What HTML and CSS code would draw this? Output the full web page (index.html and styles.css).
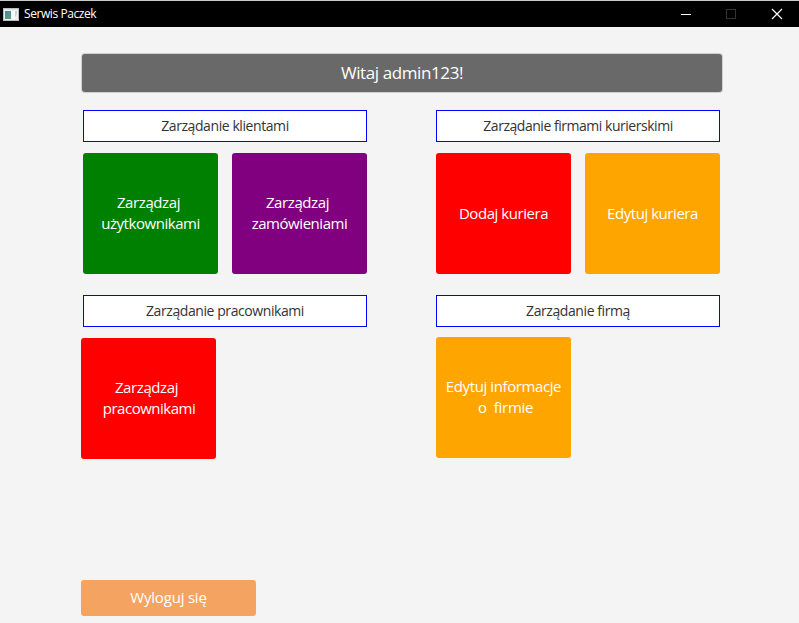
FILE: index.html
```html
<!DOCTYPE html>
<html lang="pl">
<head>
<meta charset="utf-8">
<title>Serwis Paczek</title>
<link rel="stylesheet" href="styles.css">
</head>
<body>
<header class="titlebar">
  <svg class="app-icon" width="16" height="13" viewBox="0 0 16 13">
    <defs><linearGradient id="pane" x1="0" y1="0" x2="1" y2="1"><stop offset="0" stop-color="#4f7fa8"/><stop offset="1" stop-color="#58a678"/></linearGradient></defs>
    <rect x=".5" y=".5" width="15" height="12" fill="#f0f0f0" stroke="#b9bec2"/>
    <path d="M1 1.500h14" stroke="#dfe3e6"/>
    <rect x="2" y="3" width="6" height="8" fill="url(#pane)"/>
    <path d="M9 3h3v8H9z" fill="#fafafa"/>
    <path d="M12 3h2v3l-2 3z" fill="#c3d6cf"/>
  </svg>
  <span class="app-name">Serwis Paczek</span>
  <svg class="controls" width="104" height="12" viewBox="0 0 104 12" fill="none">
    <path d="M1 6.500h10" stroke="#fff"/>
    <rect x="46.500" y="1.500" width="9" height="9" stroke="#333"/>
    <path d="M92 1l10 10M102 1L92 11" stroke="#fff" stroke-width="1.200"/>
  </svg>
</header>
<main class="content">
  <h1 class="welcome"><span>Witaj admin123!</span></h1>
  <div class="sections">
    <section class="section">
      <h2 class="label"><span>Zarządanie klientami</span></h2>
      <div class="tiles">
        <button class="tile double green"><span class="lead">Zarządzaj</span><span class="users">użytkownikami</span></button>
        <button class="tile double purple"><span class="lead">Zarządzaj</span><span class="orders">zamówieniami</span></button>
      </div>
    </section>
    <section class="section">
      <h2 class="label couriers"><span>Zarządanie firmami kurierskimi</span></h2>
      <div class="tiles">
        <button class="tile red"><span class="add">Dodaj kuriera</span></button>
        <button class="tile orange"><span class="edit">Edytuj kuriera</span></button>
      </div>
    </section>
    <section class="section">
      <h2 class="label"><span>Zarządanie pracownikami</span></h2>
      <div class="tiles staff">
        <button class="tile double red"><span class="lead">Zarządzaj</span><span class="workers">pracownikami</span></button>
      </div>
    </section>
    <section class="section">
      <h2 class="label"><span>Zarządanie firmą</span></h2>
      <div class="tiles company">
        <button class="tile double orange"><span class="info">Edytuj informacje</span><span class="firm">o&nbsp; firmie</span></button>
      </div>
    </section>
  </div>
  <button class="logout"><span>Wyloguj się</span></button>
</main>
</body>
</html>
```
FILE: styles.css
```css
* { box-sizing: border-box; }
body {
  margin: 0;
  height: 623px;
  overflow: hidden;
  background: #f4f4f4;
  font-family: "Open Sans", "Noto Sans", sans-serif;
  display: flex;
  flex-direction: column;
}
button { border: 0; padding: 0; font-family: inherit; color: #fff; }
span { white-space: nowrap; }
.titlebar {
  height: 27px;
  flex: none;
  display: flex;
  align-items: center;
  padding: 0 15px 0 3px;
  background: #000;
  border-top: 1px solid #c9cccb;
}
.app-icon { margin-right: 5px; }
.app-name { color: #fff; font-size: 12px; letter-spacing: -0.42px; padding-bottom: 1px; }
.controls { margin-left: auto; }
.content {
  flex: 1;
  display: flex;
  flex-direction: column;
  padding: 27px 77px 7px 81px;
}
.welcome {
  margin: 0 0 0 1px;
  width: 640px;
  height: 38px;
  padding-bottom: 2px;
  display: flex;
  align-items: center;
  justify-content: center;
  background: #696969;
  border-radius: 3px;
  box-shadow: 0 0 0 1px #d0d0d0;
  color: #fff;
  font-size: 17px;
  font-weight: 400;
  letter-spacing: -0.4px;
}
.sections {
  display: grid;
  grid-template-columns: 284px 284px;
  gap: 21px 69px;
  margin: 18px 0 0 2px;
}
.label {
  margin: 0 0 11px;
  height: 32px;
  padding-bottom: 2px;
  display: flex;
  align-items: center;
  justify-content: center;
  background: #fff;
  border: 1px solid #00f;
  color: #333;
  font-size: 14px;
  font-weight: 400;
  letter-spacing: -0.42px;
}
.couriers { letter-spacing: -0.47px; }
.tiles { display: flex; gap: 14px; }
.tile {
  width: 135px;
  height: 121px;
  display: flex;
  flex-direction: column;
  align-items: center;
  justify-content: center;
  border-radius: 3px;
  font-size: 15px;
  line-height: 21px;
  letter-spacing: -0.45px;
}
.double { padding-bottom: 2px; }
.lead { padding-right: 4px; letter-spacing: -0.4px; }
.firm { padding-left: 4px; letter-spacing: -0.3px; }
.info { letter-spacing: -0.4px; }
.workers { padding-left: 1px; letter-spacing: -0.5px; }
.green { background: #008000; }
.purple { background: #800080; }
.red { background: #f00; }
.orange { background: #ffa500; }
.staff { margin-left: -2px; }
.company { margin-top: -1px; }
.logout {
  width: 175px;
  height: 36px;
  padding-bottom: 2px;
  margin-top: auto;
  border-radius: 3px;
  background: #f4a460;
  font-size: 15px;
  letter-spacing: -0.2px;
}
```
